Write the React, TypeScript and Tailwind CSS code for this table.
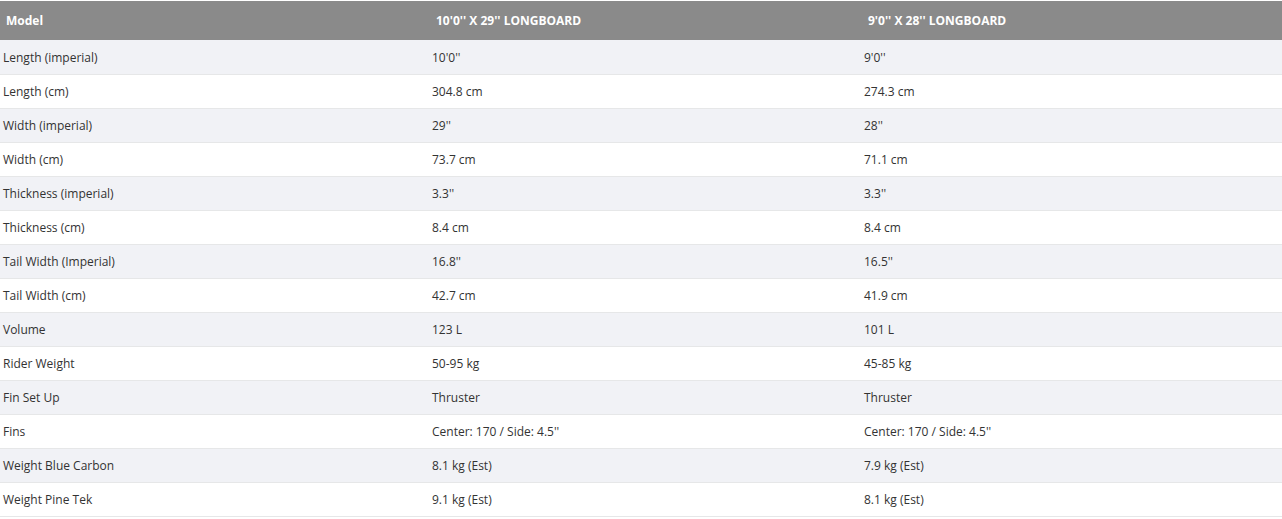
const rows: [string, string, string][] = [
  ["Length (imperial)", "10'0''", "9'0''"],
  ["Length (cm)", "304.8 cm", "274.3 cm"],
  ["Width (imperial)", "29''", "28''"],
  ["Width (cm)", "73.7 cm", "71.1 cm"],
  ["Thickness (imperial)", "3.3''", "3.3''"],
  ["Thickness (cm)", "8.4 cm", "8.4 cm"],
  ["Tail Width (Imperial)", "16.8''", "16.5''"],
  ["Tail Width (cm)", "42.7 cm", "41.9 cm"],
  ["Volume", "123 L", "101 L"],
  ["Rider Weight", "50-95 kg", "45-85 kg"],
  ["Fin Set Up", "Thruster", "Thruster"],
  ["Fins", "Center: 170 / Side: 4.5''", "Center: 170 / Side: 4.5''"],
  ["Weight Blue Carbon", "8.1 kg (Est)", "7.9 kg (Est)"],
  ["Weight Pine Tek", "9.1 kg (Est)", "8.1 kg (Est)"],
];

export default function App() {
  return (
    <div className="bg-white pt-px font-['Open_Sans',sans-serif] text-[12px] text-[#333]">
      <table className="w-[1282px] table-fixed border-collapse">
        <colgroup>
          <col className="w-[429px]" />
          <col className="w-[432px]" />
          <col className="w-[421px]" />
        </colgroup>
        <thead>
          <tr className="h-[39px] bg-[#8a8a8a] text-white">
            <th className="pl-[6px] text-left font-bold">Model</th>
            <th className="pl-[7px] text-left font-bold">10'0'' X 29'' LONGBOARD</th>
            <th className="pl-[7px] text-left font-bold">9'0'' X 28'' LONGBOARD</th>
          </tr>
        </thead>
        <tbody>
          {rows.map((r, i) => (
            <tr
              key={r[0]}
              className={`h-[34px] border-b border-[#e6e7e8] ${i % 2 === 0 ? "bg-[#f1f2f6]" : "bg-white"}`}
            >
              <td className="pl-[3px] pt-[3px] pb-px">{r[0]}</td>
              <td className="pl-[3px] pt-[3px] pb-px">{r[1]}</td>
              <td className="pl-[3px] pt-[3px] pb-px">{r[2]}</td>
            </tr>
          ))}
        </tbody>
      </table>
    </div>
  );
}
